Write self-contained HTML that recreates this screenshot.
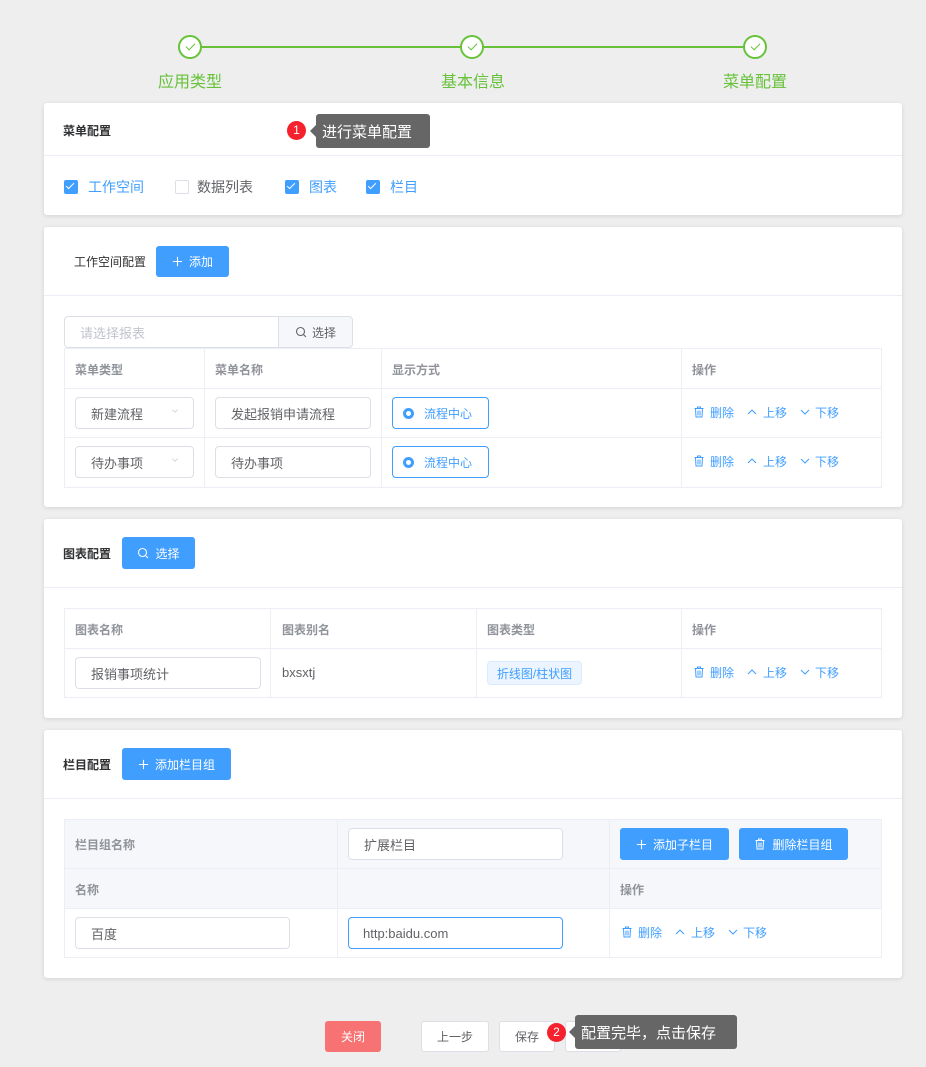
<!DOCTYPE html>
<html><head><meta charset="utf-8"><style>
*{box-sizing:border-box;margin:0;padding:0}
body{width:926px;height:1067px;background:#eeeeee;font-family:"Liberation Sans","Noto Sans CJK SC",sans-serif;position:relative;overflow:hidden;font-size:13px;color:#606266}
.a{position:absolute}
.card{position:absolute;left:44px;width:858px;background:#fff;border-radius:3px;box-shadow:0 1px 4px rgba(0,0,0,.12)}
.hl{position:absolute;left:0;right:0;height:1px;background:#ebeef5}
.t{position:absolute;font-size:12px;color:#303133}
.btn{position:absolute;background:#409eff;color:#fff;border-radius:3px;font-size:12px;display:flex;align-items:center;justify-content:center}
.btn svg{margin-right:6px}
.inp{position:absolute;border:1px solid #dcdfe6;border-radius:4px;background:#fff;font-size:13px;color:#606266;padding-left:15px;display:flex;align-items:center}
.cell{position:absolute;border:1px solid #ebeef5}
.th{font-size:12px;color:#909399;font-weight:bold}
.op{position:absolute;height:14px;width:160px}
.op svg{position:absolute;top:1px}
.op span{position:absolute;top:-1px;font-size:12px;color:#409eff;white-space:nowrap}
.cb{position:absolute;width:14px;height:14px;border-radius:2px;background:#409eff}
.cb:after{content:"";position:absolute;left:4px;top:1px;width:3px;height:7px;border:solid #fff;border-width:0 1px 1px 0;transform:rotate(45deg)}
.circ{position:absolute;width:24px;height:24px;border:2px solid #67c23a;border-radius:50%;background:#fff}
.circ:after{content:"";position:absolute;left:8px;top:4px;width:4px;height:8px;border:solid #67c23a;border-width:0 1.5px 1.5px 0;transform:rotate(45deg)}
.lab{position:absolute;top:68px;font-size:16px;color:#67c23a}
.tip{position:absolute;background:#666;color:#fff;font-size:15px;border-radius:3px;display:flex;align-items:center;padding-left:6px}
.tip:before{content:"";position:absolute;left:-6px;top:50%;margin-top:-6px;border:6px solid transparent;border-left:0;border-right-color:#666}
.badge{position:absolute;width:19px;height:19px;border-radius:50%;background:#f5222d;color:#fff;font-size:12px;text-align:center;line-height:19px}
.wb{position:absolute;background:#fff;border:1px solid #dcdfe6;border-radius:3px;font-size:12px;color:#606266;display:flex;align-items:center;justify-content:center}
.chev{position:absolute;right:12px;top:50%;margin-top:-4px}
</style></head><body>
<svg width="0" height="0" style="position:absolute">
<defs>
<symbol id="trash" viewBox="0 0 12 12"><path d="M1.5 2.5h9M4.5 2.5V1h3v1.5M2.5 2.5l.5 8.5h6l.5-8.5M5 4.5v5M7 4.5v5" fill="none" stroke="currentColor" stroke-width="1"/></symbol>
<symbol id="up" viewBox="0 0 12 12"><path d="M2 8l4-4 4 4" fill="none" stroke="currentColor" stroke-width="1"/></symbol>
<symbol id="down" viewBox="0 0 12 12"><path d="M2 4l4 4 4-4" fill="none" stroke="currentColor" stroke-width="1"/></symbol>
<symbol id="srch" viewBox="0 0 12 12"><circle cx="5.5" cy="5.5" r="4" fill="none" stroke="currentColor" stroke-width="1.1"/><path d="M8.5 8.5l2.5 2.5" stroke="currentColor" stroke-width="1.1"/></symbol>
<symbol id="plus" viewBox="0 0 12 12"><path d="M6 1v10M1 6h10" stroke="currentColor" stroke-width="1.2"/></symbol>
</defs></svg>

<div class="a" style="left:202px;top:46px;width:541px;height:2px;background:#67c23a"></div>
<div class="circ" style="left:178px;top:35px"></div>
<div class="circ" style="left:460px;top:35px"></div>
<div class="circ" style="left:743px;top:35px"></div>
<div class="lab" style="left:158px">应用类型</div>
<div class="lab" style="left:441px">基本信息</div>
<div class="lab" style="left:723px">菜单配置</div>

<div class="card" style="top:103px;height:112px">
<div class="t" style="left:19px;top:19px;font-weight:bold">菜单配置</div>
<div class="hl" style="top:52px"></div>
<div class="cb" style="left:20px;top:77px"></div><div class="a" style="left:44px;top:74px;color:#409eff;font-size:14px">工作空间</div>
<div class="a" style="left:131px;top:77px;width:14px;height:14px;border:1px solid #dcdfe6;border-radius:2px"></div><div class="a" style="left:153px;top:74px;font-size:14px">数据列表</div>
<div class="cb" style="left:241px;top:77px"></div><div class="a" style="left:265px;top:74px;color:#409eff;font-size:14px">图表</div>
<div class="cb" style="left:322px;top:77px"></div><div class="a" style="left:346px;top:74px;color:#409eff;font-size:14px">栏目</div>
</div>
<div class="badge" style="left:287px;top:121px">1</div>
<div class="tip" style="left:316px;top:114px;width:114px;height:34px">进行菜单配置</div>

<div class="card" style="top:227px;height:280px">
<div class="t" style="left:30px;top:26px">工作空间配置</div>
<div class="btn" style="left:112px;top:19px;width:73px;height:31px"><svg width="11" height="11"><use href="#plus"/></svg>添加</div>
<div class="hl" style="top:68px"></div>
</div>
<div class="inp" style="left:64px;top:316px;width:216px;height:32px;color:#c0c4cc;border-radius:4px 0 0 4px">请选择报表</div>
<div class="a" style="left:278px;top:316px;width:75px;height:32px;background:#f5f7fa;border:1px solid #dcdfe6;border-radius:0 4px 4px 0;font-size:12px;color:#606266;display:flex;align-items:center;justify-content:center"><svg width="12" height="12" style="margin-right:5px;color:#606266"><use href="#srch"/></svg>选择</div>
<div class="cell" style="left:64px;top:348px;width:818px;height:140px"></div>
<div class="a" style="left:64px;top:388px;width:818px;height:1px;background:#ebeef5"></div>
<div class="a" style="left:64px;top:437px;width:818px;height:1px;background:#ebeef5"></div>
<div class="a" style="left:204px;top:348px;width:1px;height:140px;background:#ebeef5"></div>
<div class="a" style="left:381px;top:348px;width:1px;height:140px;background:#ebeef5"></div>
<div class="a" style="left:681px;top:348px;width:1px;height:140px;background:#ebeef5"></div>
<div class="a th" style="left:75px;top:361px">菜单类型</div>
<div class="a th" style="left:215px;top:361px">菜单名称</div>
<div class="a th" style="left:392px;top:361px">显示方式</div>
<div class="a th" style="left:692px;top:361px">操作</div>
<div class="inp" style="left:75px;top:397px;width:119px;height:32px">新建流程<svg class="chev" width="12" height="8" viewBox="0 2 12 8" style="color:#c0c4cc"><use href="#down"/></svg></div>
<div class="inp" style="left:215px;top:397px;width:156px;height:32px">发起报销申请流程</div>
<div class="inp" style="left:75px;top:446px;width:119px;height:32px">待办事项<svg class="chev" width="12" height="8" viewBox="0 2 12 8" style="color:#c0c4cc"><use href="#down"/></svg></div>
<div class="inp" style="left:215px;top:446px;width:156px;height:32px">待办事项</div>
<div class="inp" style="left:392px;top:397px;width:97px;height:32px;border-color:#409eff;color:#409eff;font-size:12px;padding-left:10px"><span style="display:inline-block;width:11px;height:11px;border-radius:50%;border:3.5px solid #409eff;margin-right:10px"></span>流程中心</div>
<div class="inp" style="left:392px;top:446px;width:97px;height:32px;border-color:#409eff;color:#409eff;font-size:12px;padding-left:10px"><span style="display:inline-block;width:11px;height:11px;border-radius:50%;border:3.5px solid #409eff;margin-right:10px"></span>流程中心</div>

<div class="op" style="left:693px;top:405px;color:#409eff"><svg width="12" height="12" style="left:0"><use href="#trash"/></svg><span style="left:17px">删除</span><svg width="12" height="12" style="left:53px"><use href="#up"/></svg><span style="left:70px">上移</span><svg width="12" height="12" style="left:106px"><use href="#down"/></svg><span style="left:122px">下移</span></div>
<div class="op" style="left:693px;top:454px;color:#409eff"><svg width="12" height="12" style="left:0"><use href="#trash"/></svg><span style="left:17px">删除</span><svg width="12" height="12" style="left:53px"><use href="#up"/></svg><span style="left:70px">上移</span><svg width="12" height="12" style="left:106px"><use href="#down"/></svg><span style="left:122px">下移</span></div>

<div class="card" style="top:519px;height:199px">
<div class="t" style="left:19px;top:26px;font-weight:bold">图表配置</div>
<div class="btn" style="left:78px;top:18px;width:73px;height:32px"><svg width="12" height="12"><use href="#srch"/></svg>选择</div>
<div class="hl" style="top:68px"></div>
</div>
<div class="cell" style="left:64px;top:608px;width:818px;height:90px"></div>
<div class="a" style="left:64px;top:648px;width:818px;height:1px;background:#ebeef5"></div>
<div class="a" style="left:270px;top:608px;width:1px;height:90px;background:#ebeef5"></div>
<div class="a" style="left:476px;top:608px;width:1px;height:90px;background:#ebeef5"></div>
<div class="a" style="left:681px;top:608px;width:1px;height:90px;background:#ebeef5"></div>
<div class="a th" style="left:75px;top:621px">图表名称</div>
<div class="a th" style="left:282px;top:621px">图表别名</div>
<div class="a th" style="left:487px;top:621px">图表类型</div>
<div class="a th" style="left:692px;top:621px">操作</div>
<div class="inp" style="left:75px;top:657px;width:186px;height:32px">报销事项统计</div>
<div class="a" style="left:282px;top:665px;font-size:13px">bxsxtj</div>
<div class="a" style="left:487px;top:661px;width:95px;height:24px;background:#ecf5ff;border:1px solid #d9ecff;border-radius:4px;color:#409eff;font-size:12px;display:flex;align-items:center;justify-content:center">折线图/柱状图</div>
<div class="op" style="left:693px;top:665px;color:#409eff"><svg width="12" height="12" style="left:0"><use href="#trash"/></svg><span style="left:17px">删除</span><svg width="12" height="12" style="left:53px"><use href="#up"/></svg><span style="left:70px">上移</span><svg width="12" height="12" style="left:106px"><use href="#down"/></svg><span style="left:122px">下移</span></div>

<div class="card" style="top:730px;height:248px">
<div class="t" style="left:19px;top:26px;font-weight:bold">栏目配置</div>
<div class="btn" style="left:78px;top:18px;width:109px;height:32px"><svg width="11" height="11"><use href="#plus"/></svg>添加栏目组</div>
<div class="hl" style="top:68px"></div>
</div>
<div class="a" style="left:64px;top:819px;width:818px;height:89px;background:#f5f7fa"></div>
<div class="cell" style="left:64px;top:819px;width:818px;height:139px"></div>
<div class="a" style="left:64px;top:868px;width:818px;height:1px;background:#ebeef5"></div>
<div class="a" style="left:64px;top:908px;width:818px;height:1px;background:#ebeef5"></div>
<div class="a" style="left:337px;top:819px;width:1px;height:139px;background:#ebeef5"></div>
<div class="a" style="left:609px;top:819px;width:1px;height:139px;background:#ebeef5"></div>
<div class="a th" style="left:75px;top:836px">栏目组名称</div>
<div class="inp" style="left:348px;top:828px;width:215px;height:32px">扩展栏目</div>
<div class="btn" style="left:620px;top:828px;width:109px;height:32px"><svg width="11" height="11"><use href="#plus"/></svg>添加子栏目</div>
<div class="btn" style="left:739px;top:828px;width:109px;height:32px"><svg width="12" height="12"><use href="#trash"/></svg>删除栏目组</div>
<div class="a th" style="left:75px;top:881px">名称</div>
<div class="a th" style="left:620px;top:881px">操作</div>
<div class="inp" style="left:75px;top:917px;width:215px;height:32px">百度</div>
<div class="inp" style="left:348px;top:917px;width:215px;height:32px;border-color:#409eff;padding-left:14px">http:baidu.com</div>
<div class="op" style="left:621px;top:925px;color:#409eff"><svg width="12" height="12" style="left:0"><use href="#trash"/></svg><span style="left:17px">删除</span><svg width="12" height="12" style="left:53px"><use href="#up"/></svg><span style="left:70px">上移</span><svg width="12" height="12" style="left:106px"><use href="#down"/></svg><span style="left:122px">下移</span></div>

<div class="a" style="left:325px;top:1021px;width:56px;height:31px;background:#f77272;border-radius:3px;color:#fff;font-size:12px;display:flex;align-items:center;justify-content:center">关闭</div>
<div class="wb" style="left:421px;top:1021px;width:68px;height:31px">上一步</div>
<div class="wb" style="left:499px;top:1021px;width:56px;height:31px">保存</div>
<div class="wb" style="left:565px;top:1021px;width:56px;height:31px">发布</div>
<div class="badge" style="left:547px;top:1023px">2</div>
<div class="tip" style="left:575px;top:1015px;width:162px;height:34px">配置完毕，点击保存</div>
</body></html>
